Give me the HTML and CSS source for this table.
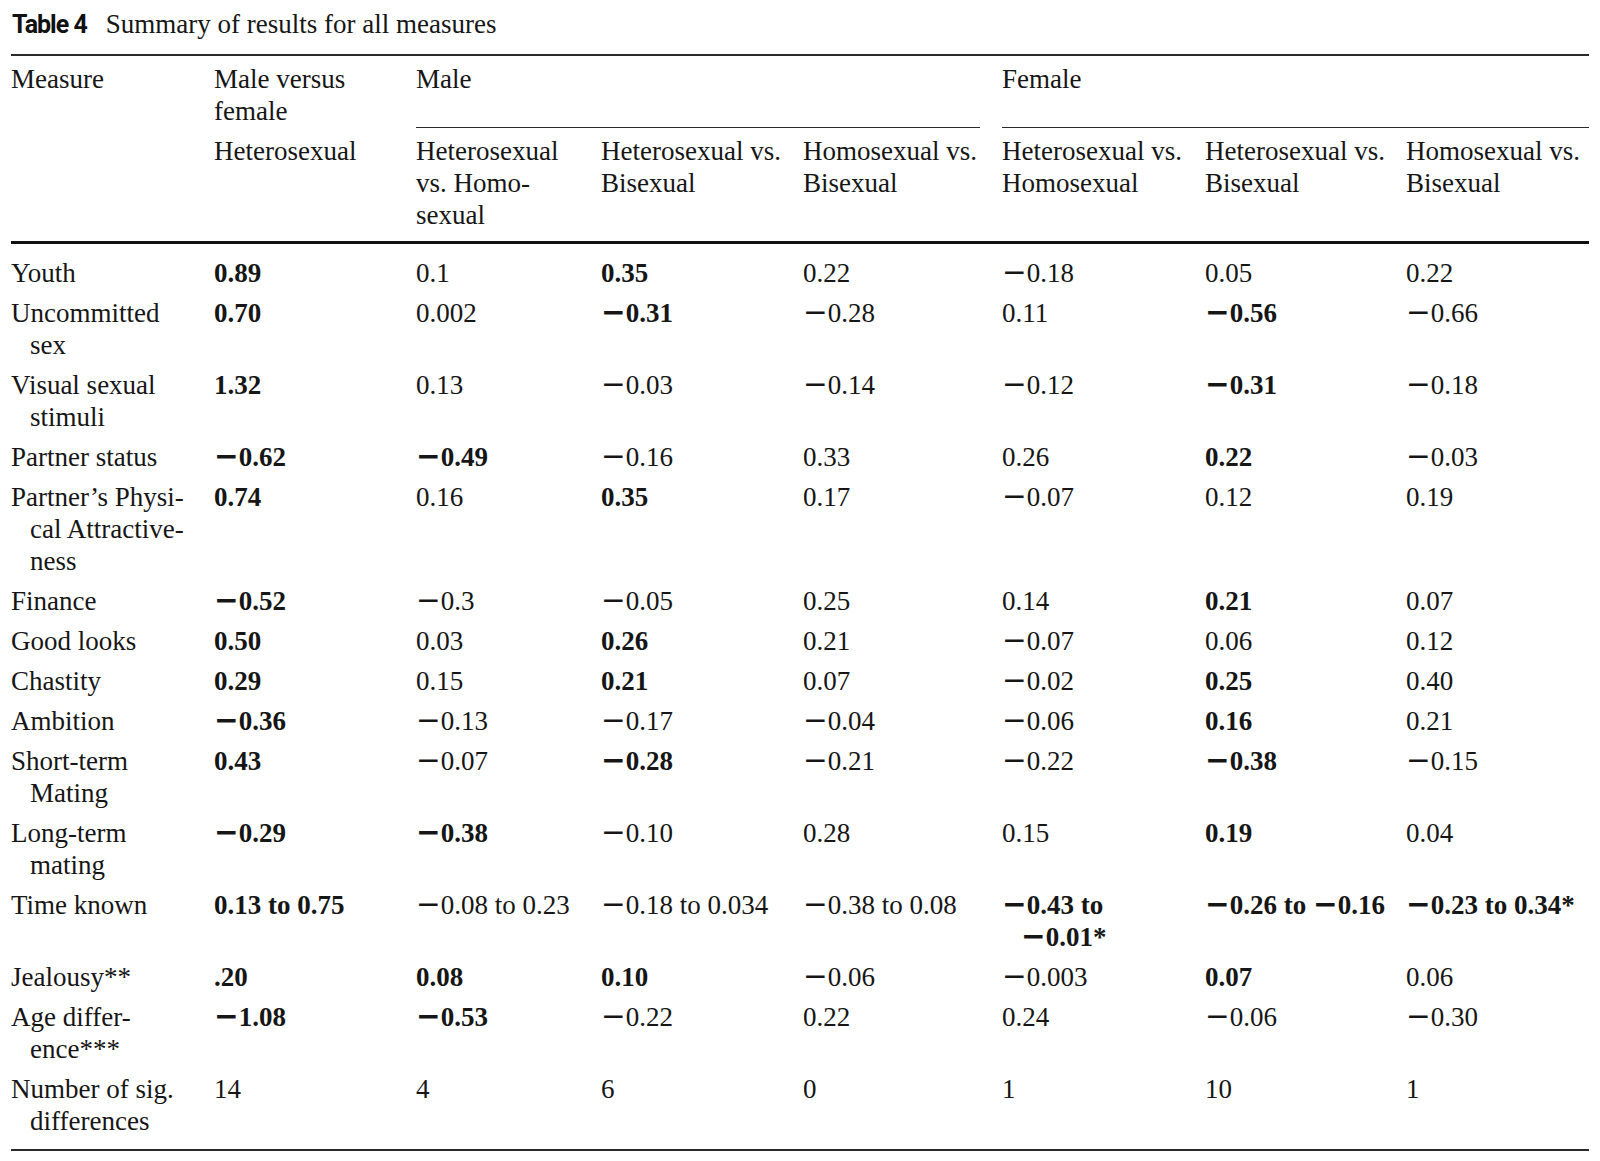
FILE: index.html
```html
<!DOCTYPE html>
<html lang="en">
<head>
<meta charset="utf-8">
<title>Table 4 Summary of results for all measures</title>
<link rel="stylesheet" href="styles.css">
</head>
<body>
<div class="page">
  <div class="caption"><span class="cap-label">Table 4</span><span class="cap-text">Summary of results for all measures</span></div>
  <table class="results">
    <colgroup>
      <col class="c1"><col class="c2"><col class="c3"><col class="c4"><col class="c5"><col class="c6"><col class="c7"><col class="c8">
    </colgroup>
    <thead>
      <tr class="h1">
        <th rowspan="2">Measure</th>
        <th>Male versus<br>female</th>
        <th colspan="3" class="grp grp-male"><div class="grp-label">Male</div></th>
        <th colspan="3" class="grp"><div class="grp-label">Female</div></th>
      </tr>
      <tr class="h2">
        <th>Heterosexual</th>
        <th>Heterosexual<br>vs. Homo-<br>sexual</th>
        <th>Heterosexual vs.<br>Bisexual</th>
        <th>Homosexual vs.<br>Bisexual</th>
        <th>Heterosexual vs.<br>Homosexual</th>
        <th>Heterosexual vs.<br>Bisexual</th>
        <th>Homosexual vs.<br>Bisexual</th>
      </tr>
    </thead>
    <tbody>
      <tr><td>Youth</td><td class="b">0.89</td><td>0.1</td><td class="b">0.35</td><td>0.22</td><td><span class="neg">−</span>0.18</td><td>0.05</td><td>0.22</td></tr>
      <tr><td>Uncommitted<br>sex</td><td class="b">0.70</td><td>0.002</td><td class="b"><span class="neg">−</span>0.31</td><td><span class="neg">−</span>0.28</td><td>0.11</td><td class="b"><span class="neg">−</span>0.56</td><td><span class="neg">−</span>0.66</td></tr>
      <tr><td>Visual sexual<br>stimuli</td><td class="b">1.32</td><td>0.13</td><td><span class="neg">−</span>0.03</td><td><span class="neg">−</span>0.14</td><td><span class="neg">−</span>0.12</td><td class="b"><span class="neg">−</span>0.31</td><td><span class="neg">−</span>0.18</td></tr>
      <tr><td>Partner status</td><td class="b"><span class="neg">−</span>0.62</td><td class="b"><span class="neg">−</span>0.49</td><td><span class="neg">−</span>0.16</td><td>0.33</td><td>0.26</td><td class="b">0.22</td><td><span class="neg">−</span>0.03</td></tr>
      <tr><td>Partner’s Physi-<br>cal Attractive-<br>ness</td><td class="b">0.74</td><td>0.16</td><td class="b">0.35</td><td>0.17</td><td><span class="neg">−</span>0.07</td><td>0.12</td><td>0.19</td></tr>
      <tr><td>Finance</td><td class="b"><span class="neg">−</span>0.52</td><td><span class="neg">−</span>0.3</td><td><span class="neg">−</span>0.05</td><td>0.25</td><td>0.14</td><td class="b">0.21</td><td>0.07</td></tr>
      <tr><td>Good looks</td><td class="b">0.50</td><td>0.03</td><td class="b">0.26</td><td>0.21</td><td><span class="neg">−</span>0.07</td><td>0.06</td><td>0.12</td></tr>
      <tr><td>Chastity</td><td class="b">0.29</td><td>0.15</td><td class="b">0.21</td><td>0.07</td><td><span class="neg">−</span>0.02</td><td class="b">0.25</td><td>0.40</td></tr>
      <tr><td>Ambition</td><td class="b"><span class="neg">−</span>0.36</td><td><span class="neg">−</span>0.13</td><td><span class="neg">−</span>0.17</td><td><span class="neg">−</span>0.04</td><td><span class="neg">−</span>0.06</td><td class="b">0.16</td><td>0.21</td></tr>
      <tr><td>Short-term<br>Mating</td><td class="b">0.43</td><td><span class="neg">−</span>0.07</td><td class="b"><span class="neg">−</span>0.28</td><td><span class="neg">−</span>0.21</td><td><span class="neg">−</span>0.22</td><td class="b"><span class="neg">−</span>0.38</td><td><span class="neg">−</span>0.15</td></tr>
      <tr><td>Long-term<br>mating</td><td class="b"><span class="neg">−</span>0.29</td><td class="b"><span class="neg">−</span>0.38</td><td><span class="neg">−</span>0.10</td><td>0.28</td><td>0.15</td><td class="b">0.19</td><td>0.04</td></tr>
      <tr><td>Time known</td><td class="b">0.13 to 0.75</td><td><span class="neg">−</span>0.08 to 0.23</td><td><span class="neg">−</span>0.18 to 0.034</td><td><span class="neg">−</span>0.38 to 0.08</td><td class="b"><span class="neg">−</span>0.43 to<br><span class="neg">−</span>0.01*</td><td class="b"><span class="neg">−</span>0.26 to <span class="neg">−</span>0.16</td><td class="b"><span class="neg">−</span>0.23 to 0.34*</td></tr>
      <tr><td>Jealousy**</td><td class="b">.20</td><td class="b">0.08</td><td class="b">0.10</td><td><span class="neg">−</span>0.06</td><td><span class="neg">−</span>0.003</td><td class="b">0.07</td><td>0.06</td></tr>
      <tr><td>Age differ-<br>ence***</td><td class="b"><span class="neg">−</span>1.08</td><td class="b"><span class="neg">−</span>0.53</td><td><span class="neg">−</span>0.22</td><td>0.22</td><td>0.24</td><td><span class="neg">−</span>0.06</td><td><span class="neg">−</span>0.30</td></tr>
      <tr><td>Number of sig.<br>differences</td><td>14</td><td>4</td><td>6</td><td>0</td><td>1</td><td>10</td><td>1</td></tr>
    </tbody>
  </table>
</div>
</body>
</html>
```
FILE: styles.css
```css
html, body {
  margin: 0;
  padding: 0;
  background: #ffffff;
}

.page {
  padding: 8px 11px 0 11px;
  color: #161616;
  font-family: "Liberation Serif", "Times New Roman", serif;
  font-size: 27px;
  line-height: 32px;
}

.caption {
  display: flex;
  align-items: baseline;
  height: 32px;
  margin-bottom: 14px;
  padding-left: 1px;
}

.cap-label {
  font-family: Roboto, "Noto Sans", sans-serif;
  font-weight: 700;
  font-size: 25px;
  letter-spacing: -1px;
  margin-right: 19px;
  color: #111111;
}

.cap-text {
  font-size: 27px;
}

.results {
  border-collapse: collapse;
  border-spacing: 0;
  table-layout: fixed;
  width: 1578px;
  border-top: 2px solid #2a2a2a;
  border-bottom: 2px solid #2a2a2a;
}

.c1 { width: 203px; }
.c2 { width: 202px; }
.c3 { width: 185px; }
.c4 { width: 202px; }
.c5 { width: 199px; }
.c6 { width: 203px; }
.c7 { width: 201px; }
.c8 { width: 183px; }

.results th,
.results td {
  font-weight: 400;
  text-align: left;
  vertical-align: top;
  white-space: nowrap;
}

.results td {
  padding: 4px 0 4px 19px;
  text-indent: -19px;
}

.results th {
  padding: 0;
}

.results .b {
  font-weight: 700;
}

.neg {
  font-family: "DejaVu Sans", sans-serif;
  font-size: 29.5px;
  line-height: 0;
}

.h1 th {
  padding-top: 7px;
}

.h2 th {
  padding-top: 6.5px;
  padding-bottom: 10px;
}

thead {
  border-bottom: 3px solid #111111;
}

.results .grp-male {
  padding-right: 22px;
}

.grp-label {
  height: 64px;
  border-bottom: 1.5px solid #2a2a2a;
}

tbody tr:first-child td {
  padding-top: 13.5px;
}

tbody tr:last-child td {
  padding-bottom: 11.5px;
}
```
